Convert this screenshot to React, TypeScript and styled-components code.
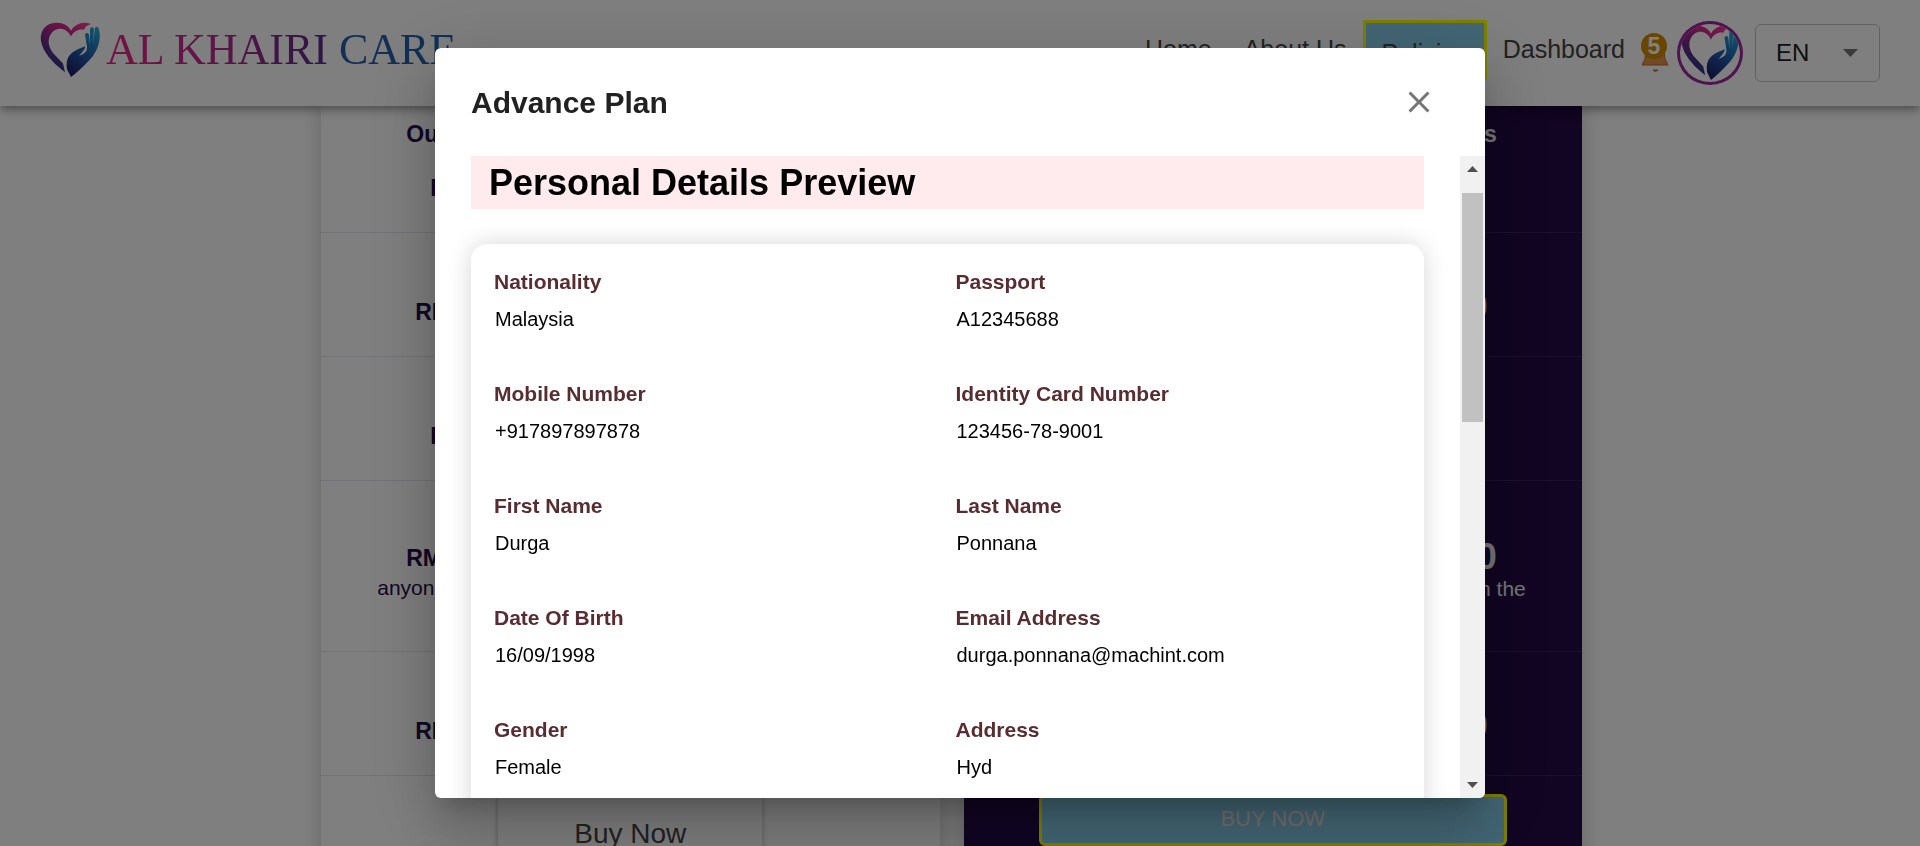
import React, { useRef, useState } from "react";
import styled, { createGlobalStyle } from "styled-components";

const GlobalStyle = createGlobalStyle`
  *, *::before, *::after { box-sizing: border-box; }
  html, body { margin: 0; height: 100%; overflow: hidden; background: #fff; }
  body, button, select { font-family: "Liberation Sans", Arial, sans-serif; }
  h1, h2, p, dl, dd, dt { margin: 0; }
`;

const Header = styled.header`
  position: relative;
  z-index: 1;
  display: flex;
  align-items: center;
  justify-content: space-between;
  height: 106px;
  padding: 0 40px;
  background: #fff;
  box-shadow: 0 3px 6px -1px rgba(0, 0, 0, 0.2), 0 6px 8px rgba(0, 0, 0, 0.14),
    0 2px 15px rgba(0, 0, 0, 0.12);
`;

const Brand = styled.a`
  display: flex;
  align-items: center;
  gap: 6px;
  padding-bottom: 7px;
  text-decoration: none;
`;

const BrandName = styled.span`
  font-family: "Liberation Serif", "Times New Roman", serif;
  font-size: 44px;
  line-height: 56px;
  white-space: nowrap;
  color: transparent;
  background: linear-gradient(90deg, #e8288a 0%, #c02a90 30%, #7c2a8c 50%, #5c2c8c 62%, #2a5fa8 66%, #1f5fb0 100%);
  background-clip: text;
  -webkit-background-clip: text;
`;

const Right = styled.div`
  display: flex;
  align-items: center;
`;

const Nav = styled.nav`
  display: flex;
  align-items: center;
  padding-bottom: 7px;
`;

const NavLink = styled.a<{ $active?: boolean }>`
  padding: ${(p) => (p.$active ? "12px 16px 6px" : "0 16px 2px")};
  border: ${(p) => (p.$active ? "3px solid #ff0" : "0")};
  background: ${(p) => (p.$active ? "skyblue" : "transparent")};
  font-size: 25px;
  line-height: 36px;
  color: #444;
  text-decoration: none;
`;

const BellButton = styled.button`
  display: flex;
  position: relative;
  width: 28px;
  height: 40px;
  margin-right: 8px;
  padding: 0;
  border: 0;
  background: none;
`;

const Badge = styled.span`
  position: absolute;
  top: 0;
  left: 0;
  width: 26px;
  height: 26px;
  border-radius: 13px;
  background: #d08c00;
  color: #fff;
  font-size: 23px;
  font-weight: 700;
  line-height: 26px;
  text-align: center;
`;

const Avatar = styled.button`
  display: flex;
  align-items: center;
  justify-content: center;
  width: 66px;
  height: 64px;
  margin-right: 12px;
  padding: 0;
  overflow: hidden;
  border: 3px solid #9c27a0;
  border-radius: 50%;
  background: #fff;
`;

const SelectBox = styled.div`
  position: relative;
  display: flex;
  align-items: center;
  width: 125px;
  height: 58px;
`;

const Select = styled.select`
  appearance: none;
  width: 100%;
  height: 100%;
  padding: 0 20px 2px;
  border: 1px solid #c4c4c4;
  border-radius: 6px;
  background: #fff;
  font-size: 24px;
  color: #212121;
`;

const SelectArrow = styled.svg`
  position: absolute;
  right: 22px;
  pointer-events: none;
`;

const Page = styled.div`
  padding: 0 338px 0 321px;
`;

const Plans = styled.main`
  display: grid;
  grid-template-columns: 1fr 1fr;
  gap: 24px;
`;

const Plan = styled.section<{ $dark?: boolean }>`
  padding-top: 3px;
  background: ${(p) => (p.$dark ? "#220a46" : "#fff")};
  color: ${(p) => (p.$dark ? "#eee" : "#240c4a")};
  text-align: ${(p) => (p.$dark ? "right" : "left")};
  box-shadow: 0 0 20px rgba(0, 0, 0, 0.2);
`;

const PlanRow = styled.div<{ $kind?: "first" | "tall"; $dark?: boolean }>`
  display: flex;
  flex-direction: column;
  align-items: center;
  justify-content: center;
  height: ${(p) => (p.$kind === "tall" ? 171 : 124)}px;
  padding: ${(p) =>
    p.$kind === "first" ? "0 0 20px" : p.$kind === "tall" ? "14px 0 0" : p.$dark ? "24px 0 0" : "34px 0 0"};
  border-bottom: 1px solid ${(p) => (p.$dark ? "#34205a" : "#e6e6ee")};
`;

const PlanLine = styled.p<{ $width: number; $size?: number; $plain?: boolean; $after?: number }>`
  width: ${(p) => p.$width}px;
  max-width: 100%;
  margin-bottom: ${(p) => p.$after || 0}px;
  font-size: ${(p) => p.$size || 23}px;
  font-weight: ${(p) => (p.$plain ? 400 : 700)};
  line-height: 30px;
  white-space: nowrap;
`;

const PlanFooter = styled.div`
  display: flex;
  justify-content: center;
  padding: 18px 0 40px;
`;

const OutlineBuy = styled.button`
  width: 264px;
  height: 80px;
  border: 0;
  border-radius: 8px;
  background: #fff;
  color: #444;
  font-size: 28px;
  box-shadow: 0 0 6px rgba(0, 0, 0, 0.3);
`;

const FilledBuy = styled.button`
  width: 468px;
  height: 52px;
  padding: 0 0 2px;
  border: 3px solid #ff0;
  border-radius: 6px;
  background: skyblue;
  color: #eadfdf;
  font-size: 22px;
`;

const Backdrop = styled.div`
  position: fixed;
  inset: 0;
  z-index: 2;
  display: flex;
  align-items: center;
  justify-content: center;
  padding: 48px;
  background: rgba(0, 0, 0, 0.5);
`;

const Dialog = styled.div`
  display: flex;
  flex-direction: column;
  width: 100%;
  max-width: 1050px;
  height: 100%;
  overflow: hidden;
  border-radius: 6px;
  background: #fff;
  box-shadow: 0 16px 22px -10px rgba(0, 0, 0, 0.2), 0 36px 57px 4px rgba(0, 0, 0, 0.14),
    0 14px 69px 12px rgba(0, 0, 0, 0.12);
`;

const DialogHead = styled.div`
  display: flex;
  align-items: center;
  justify-content: space-between;
  flex: none;
  height: 108px;
  padding: 0 48px 0 36px;
`;

const DialogTitle = styled.h1`
  padding-top: 2px;
  font-size: 30px;
  line-height: 48px;
  color: #212121;
`;

const CloseButton = styled.button`
  display: flex;
  padding: 0;
  border: 0;
  background: none;
`;

const DialogBody = styled.div`
  display: flex;
  flex: 1;
  min-height: 0;
`;

const Scroller = styled.div`
  flex: 1;
  overflow-y: auto;
  padding: 0 36px;
  scrollbar-width: none;
`;

const SectionTitle = styled.h2`
  margin-bottom: 35px;
  padding: 0 18px;
  background: #ffebee;
  font-size: 36px;
  line-height: 53px;
  color: #000;
`;

const Details = styled.dl`
  display: grid;
  grid-template-columns: 1fr 1fr;
  row-gap: 37px;
  margin-bottom: 36px;
  padding: 19px 7px 48px 23px;
  border-radius: 16px;
  background: #fff;
  box-shadow: 0 0 24px rgba(0, 0, 0, 0.16);
`;

const Label = styled.dt`
  font-size: 21px;
  font-weight: 700;
  line-height: 38px;
  color: #572d33;
`;

const Value = styled.dd`
  padding-left: 1px;
  font-size: 20px;
  line-height: 37px;
  color: #000;
`;

const Scrollbar = styled.div`
  display: flex;
  flex-direction: column;
  width: 25px;
  background: #f1f1f1;
`;

const ScrollButton = styled.button<{ $down?: boolean }>`
  display: flex;
  justify-content: center;
  align-items: ${(p) => (p.$down ? "flex-end" : "flex-start")};
  height: 37px;
  padding: 10px 0;
  border: 0;
  background: none;
`;

const Track = styled.div`
  flex: 1;
  padding: 0 2px;
`;

const Thumb = styled.div`
  height: 229px;
  background: #c1c1c1;
`;

const FIELDS = [
  ["Nationality", "Malaysia"],
  ["Passport", "A12345688"],
  ["Mobile Number", "+917897897878"],
  ["Identity Card Number", "123456-78-9001"],
  ["First Name", "Durga"],
  ["Last Name", "Ponnana"],
  ["Date Of Birth", "16/09/1998"],
  ["Email Address", "durga.ponnana@machint.com"],
  ["Gender", "Female"],
  ["Address", "Hyd"],
];

function HeartHand({ width, height, id }: { width: number; height: number; id: string }) {
  return (
    <svg width={width} height={height} viewBox="0 0 60 58" preserveAspectRatio="none" aria-hidden="true">
      <defs>
        <linearGradient id={`${id}-heart`} x1="1" y1="0" x2="0.35" y2="1">
          <stop offset="0" stopColor="#ff3a96" />
          <stop offset="0.35" stopColor="#d0288c" />
          <stop offset="0.7" stopColor="#6a2a86" />
          <stop offset="1" stopColor="#1f3a90" />
        </linearGradient>
        <linearGradient id={`${id}-hand`} x1="0.8" y1="0" x2="0.3" y2="1">
          <stop offset="0" stopColor="#22a8d8" />
          <stop offset="0.5" stopColor="#2060b0" />
          <stop offset="1" stopColor="#20206c" />
        </linearGradient>
      </defs>
      <path
        fill={`url(#${id}-heart)`}
        d="M31 9C35 2 43 -1 51 2C47 3 45 5 44 8C39 7 34 9 31 15C27 7 20 5 14 9C6 15 8 26 13 32L23 43L25 52C15 44 6 35 2 24C-2 12 4 2 14 1C22 0 28 3 31 9Z"
      />
      <path
        fill={`url(#${id}-hand)`}
        d="M31 57L27 49C26 41 27 36 33 31C37 28 41 27 45 25C46 27 42 32 39 35C46 33 47 30 47 26L45 13Q47 10 49 13L50 24L50 7Q52 4 54 7L53 24L55 6Q58 3 59 8C62 20 56 33 49 40C43 47 36 53 31 57Z"
      />
    </svg>
  );
}

export default function App() {
  const scroller = useRef<HTMLDivElement>(null);
  const [progress, setProgress] = useState(0);
  const scroll = (by: number) => scroller.current?.scrollBy({ top: by });

  return (
    <>
      <GlobalStyle />
      <Header>
        <Brand href="#" aria-label="Al Khairi Care">
          <HeartHand width={60} height={56} id="brand" />
          <BrandName>AL KHAIRI CARE</BrandName>
        </Brand>
        <Right>
          <Nav>
            <NavLink href="#">Home</NavLink>
            <NavLink href="#">About Us</NavLink>
            <NavLink href="#" $active>Policies</NavLink>
            <NavLink href="#">Dashboard</NavLink>
          </Nav>
          <BellButton aria-label="Notifications">
            <svg width="28" height="40" viewBox="0 0 28 40">
              <path d="M5 15H23L24 26L27 32H1L4 26Z" fill="#e0964a" stroke="#d8601a" strokeWidth="1" />
              <path d="M12 37Q14 40 17 37Z" fill="#e0964a" stroke="#d8601a" />
            </svg>
            <Badge>5</Badge>
          </BellButton>
          <Avatar aria-label="Profile">
            <HeartHand width={58} height={56} id="avatar" />
          </Avatar>
          <SelectBox>
            <Select aria-label="Language" defaultValue="EN">
              <option>EN</option>
            </Select>
            <SelectArrow width="15" height="8" viewBox="0 0 15 8">
              <path d="M0 0H15L7.5 8Z" fill="#757575" />
            </SelectArrow>
          </SelectBox>
        </Right>
      </Header>

      <Page>
        <Plans>
          <Plan>
            <PlanRow $kind="first">
              <PlanLine $width={448} $after={24}>Our Benefits</PlanLine>
              <PlanLine $width={400}>RM</PlanLine>
            </PlanRow>
            <PlanRow><PlanLine $width={430}>RM</PlanLine></PlanRow>
            <PlanRow><PlanLine $width={400}>RM</PlanLine></PlanRow>
            <PlanRow $kind="tall">
              <PlanLine $width={448}>RM</PlanLine>
              <PlanLine $width={506} $size={21} $plain>anyone</PlanLine>
            </PlanRow>
            <PlanRow><PlanLine $width={430}>RM</PlanLine></PlanRow>
            <PlanFooter><OutlineBuy>Buy Now</OutlineBuy></PlanFooter>
          </Plan>
          <Plan $dark>
            <PlanRow $dark $kind="first">
              <PlanLine $width={448} $after={24}>Benefits</PlanLine>
              <PlanLine $width={400}>RM</PlanLine>
            </PlanRow>
            <PlanRow $dark><PlanLine $width={430} $size={36}>0</PlanLine></PlanRow>
            <PlanRow $dark><PlanLine $width={400}>0</PlanLine></PlanRow>
            <PlanRow $dark $kind="tall">
              <PlanLine $width={448} $size={36} $after={2}>0</PlanLine>
              <PlanLine $width={506} $size={21} $plain>on the</PlanLine>
            </PlanRow>
            <PlanRow $dark><PlanLine $width={430} $size={36}>0</PlanLine></PlanRow>
            <PlanFooter><FilledBuy>BUY NOW</FilledBuy></PlanFooter>
          </Plan>
        </Plans>
      </Page>

      <Backdrop>
        <Dialog role="dialog" aria-modal="true" aria-labelledby="dialog-title">
          <DialogHead>
            <DialogTitle id="dialog-title">Advance Plan</DialogTitle>
            <CloseButton aria-label="Close">
              <svg width="36" height="36" viewBox="0 0 24 24" fill="#757575">
                <path d="M19 6.41 17.59 5 12 10.59 6.41 5 5 6.41 10.59 12 5 17.59 6.41 19 12 13.41 17.59 19 19 17.59 13.41 12z" />
              </svg>
            </CloseButton>
          </DialogHead>
          <DialogBody>
            <Scroller
              ref={scroller}
              onScroll={(e) => {
                const el = e.currentTarget;
                setProgress(el.scrollTop / Math.max(1, el.scrollHeight - el.clientHeight));
              }}
            >
              <SectionTitle>Personal Details Preview</SectionTitle>
              <Details>
                {FIELDS.map(([label, value]) => (
                  <div key={label}>
                    <Label>{label}</Label>
                    <Value>{value}</Value>
                  </div>
                ))}
              </Details>
            </Scroller>
            <Scrollbar>
              <ScrollButton aria-label="Scroll up" onClick={() => scroll(-60)}>
                <svg width="11" height="6" viewBox="0 0 11 6"><path d="M0 6L5.5 0L11 6Z" fill="#505050" /></svg>
              </ScrollButton>
              <Track>
                <Thumb style={{ transform: `translateY(${Math.round(progress * 339)}px)` }} />
              </Track>
              <ScrollButton $down aria-label="Scroll down" onClick={() => scroll(60)}>
                <svg width="11" height="6" viewBox="0 0 11 6"><path d="M0 0L5.5 6L11 0Z" fill="#505050" /></svg>
              </ScrollButton>
            </Scrollbar>
          </DialogBody>
        </Dialog>
      </Backdrop>
    </>
  );
}
